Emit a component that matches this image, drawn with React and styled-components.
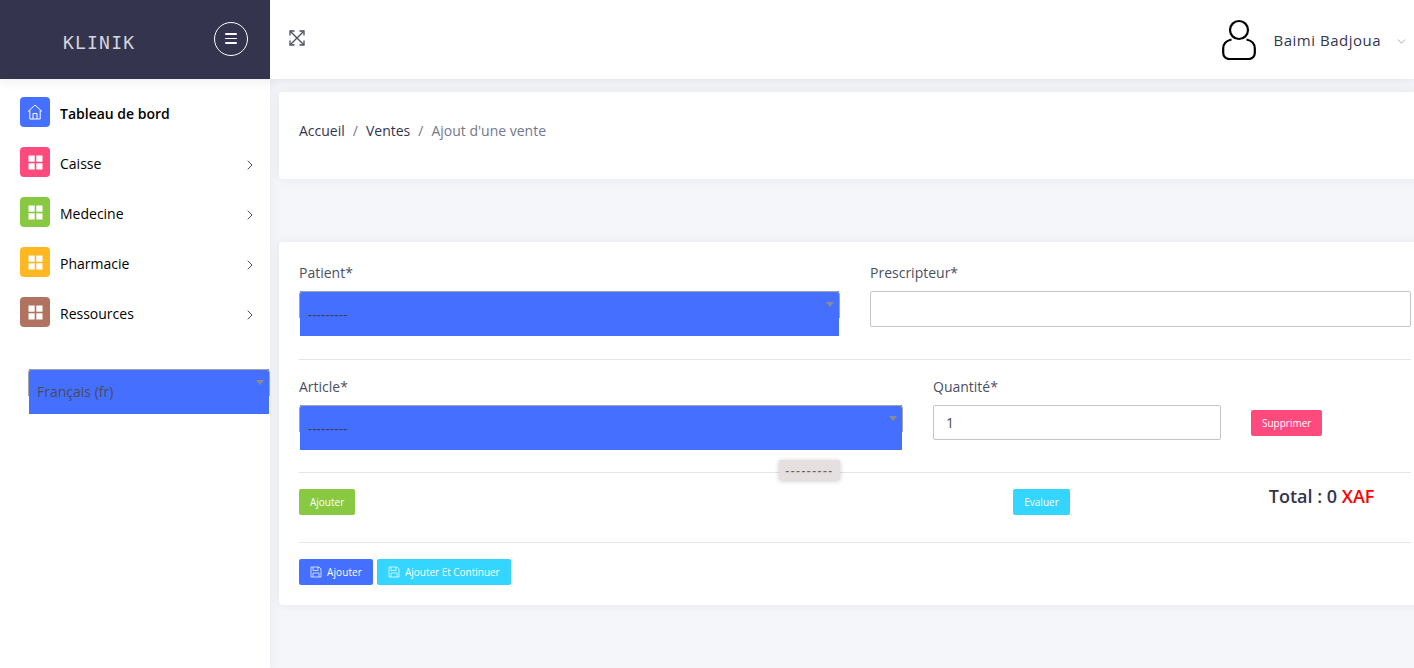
import React from "react";
import styled, { createGlobalStyle } from "styled-components";
import { ChevronRight, ChevronDown } from "lucide-react";

const Global = createGlobalStyle`
  html, body { margin: 0; padding: 0; height: 100%; overflow: hidden; background: #f5f6fa; }
  body { font-family: "Open Sans", "Liberation Sans", sans-serif; font-size: 14px; color: #343a50; }
  * { box-sizing: border-box; }
`;

const Page = styled.div`
  width: 1414px; height: 668px; overflow: hidden;
  display: flex; flex-direction: column;
`;
const Header = styled.header`
  flex: none; height: 79px; display: flex; background: #fff;
  box-shadow: 0 0 12px rgba(50, 50, 80, 0.12); position: relative; z-index: 2;
`;
const Brand = styled.div`
  width: 270px; background: #34344e; display: flex; align-items: center;
  padding: 4px 22px 0 63px; justify-content: space-between;
`;
const Logo = styled.div`
  font-family: "DejaVu Sans Mono", monospace; font-size: 18px; letter-spacing: 1.2px;
  color: #d4d4dc; padding-top: 1px;
`;
const Burger = styled.div`
  width: 34px; height: 34px; border: 1px solid #fff; border-radius: 50%;
  display: flex; flex-direction: column; justify-content: center; align-items: center; gap: 3px;
  margin-top: -6px;
`;
const BurgerLine = styled.span`
  width: 12px; height: 1.5px; background: #fff; border-radius: 1px;
`;
const Topbar = styled.div`
  flex: 1; display: flex; align-items: center; justify-content: space-between;
  padding: 0 6px 0 19px; color: #34344e;
`;
const ExpandIcon = styled.svg`
  margin-top: -4px; display: block;
`;
const User = styled.div`
  display: flex; align-items: center;
`;
const UserName = styled.span`
  font-size: 15px; margin-left: 18px; color: #34344e; letter-spacing: 0.5px;
`;
const Caret = styled.span`
  display: flex; margin-left: 14px; margin-top: 3px; color: #74788d;
`;
const Body = styled.div`
  flex: 1; display: flex; min-height: 0;
`;
const Sidebar = styled.nav`
  flex: none; width: 270px; background: #fff; padding-top: 18px;
  box-shadow: 0 0 10px rgba(50, 50, 80, 0.08); position: relative; z-index: 1;
`;
const MenuRow = styled.div`
  display: flex; align-items: center; height: 30px; margin: 0 0 20px 20px; padding-right: 12px;
`;
const IconBox = styled.span`
  width: 30px; height: 30px; border-radius: 4px; background: ${p => p.$color};
  display: flex; align-items: center; justify-content: center; color: #fff;
`;
const MenuLabel = styled.span`
  flex: 1; margin-left: 10px; font-size: 14px; color: #000; margin-top: 3px;
  font-weight: ${p => (p.$bold ? 600 : 400)};
`;
const MenuChevron = styled.span`
  display: flex; color: #222; margin-top: 5px;
`;
const SideSelect = styled.div`
  margin: 42px 0 0 28px; width: 242px;
`;
const SelectWrap = styled.div`
  position: relative; height: 45px; padding: 0 1px;
`;
const SelectFill = styled.div`
  height: 45px; background: #4570ff; color: ${p => p.$ink};
  padding: ${p => p.$top}px 0 0 ${p => p.$pad}px; font-size: ${p => p.$size}px; line-height: 22px;
  letter-spacing: ${p => p.$track}px; font-weight: ${p => p.$weight};
`;
const SelectFrame = styled.span`
  position: absolute; left: 0; right: 0; top: 0; height: 27px;
  border: 1px solid #a3a3aa; border-bottom: 0; border-radius: 4px 4px 0 0;
  pointer-events: none;
`;
const SelectArrow = styled.span`
  position: absolute; right: 6px; top: 11px; width: 0; height: 0;
  border-left: 4px solid transparent; border-right: 4px solid transparent;
  border-top: 5px solid #8c8c8c;
`;
const Main = styled.main`
  flex: none; width: 1152px; margin-left: 9px; padding-top: 13px;
`;
const Card = styled.section`
  background: #fff; border-radius: 4px;
  box-shadow: 0 0 10px rgba(50, 50, 80, 0.08);
`;
const Crumbs = styled(Card)`
  height: 87px; display: flex; align-items: center; padding: 0 20px 11px; font-size: 14px;
`;
const Crumb = styled.span`
  color: ${p => (p.$muted ? "#74788d" : "#34344e")};
`;
const Sep = styled.span`
  color: #74788d; margin: 0 8px;
`;
const FormCard = styled(Card)`
  margin-top: 63px; height: 363px; padding: 21px 20px 0; position: relative;
`;
const Row = styled.div`
  display: grid; grid-template-columns: ${p => p.$cols}; column-gap: 30px; align-items: start;
`;
const Label = styled.label`
  display: block; font-size: 14px; line-height: 20px; color: #4a4f63; margin-bottom: 8px;
`;
const Input = styled.div`
  height: ${p => p.$h}px; border: 1px solid #c4c4c4; border-radius: 2px; background: #fff;
  padding: 0 12px; display: flex; align-items: center; color: #495057; font-size: 14px;
`;
const Rule = styled.hr`
  border: 0; border-top: 1px solid #e4e5e9; margin: ${p => p.$m};
`;
const Btn = styled.span`
  display: inline-flex; align-items: center; height: 26px; border-radius: 2px;
  background: ${p => p.$color}; color: #fff; font-size: 10px; font-weight: 400;
  padding: 0 11px; white-space: nowrap; letter-spacing: ${p => p.$track || 0}px;
`;
const BtnIcon = styled.svg`
  display: block; margin-right: 5px; flex: none;
`;
const DeleteSlot = styled.div`
  padding-top: 33px;
`;
const ActionRow = styled.div`
  display: flex; align-items: flex-start; height: 53px;
`;
const EvalSlot = styled.div`
  margin-left: 658px;
`;
const Total = styled.div`
  margin-left: 199px; font-size: 18px; font-weight: 600; color: #34344e; line-height: 14px;
`;
const Red = styled.span`
  color: #f00;
`;
const Buttons = styled.div`
  display: flex; gap: 4px;
`;
const Popup = styled.div`
  position: absolute; left: 500px; top: 218px; width: 61px; height: 20px;
  background: #e6dfdf; border-radius: 2px; box-shadow: 0 1px 5px rgba(0,0,0,.22);
  font-size: 12px; font-weight: 600; color: #666; display: flex; align-items: center; justify-content: center;
  letter-spacing: 1.5px;
`;

const Grid = () => (
  <svg width="15" height="15" viewBox="0 0 15 15" fill="#fff">
    <rect x="0.5" y="0.5" width="6.2" height="6.2" />
    <rect x="8.3" y="0.5" width="6.2" height="6.2" />
    <rect x="0.5" y="8.3" width="6.2" height="6.2" />
    <rect x="8.3" y="8.3" width="6.2" height="6.2" />
  </svg>
);

const HouseIcon = () => (
  <svg width="16" height="16" viewBox="0 0 16 16" fill="none" stroke="#fff" strokeWidth="1">
    <path d="M1 7.5 8 1l7 6.500" />
    <path d="M2.800 6.200V15h10.400V6.200" />
    <path d="M6 15V9.500h4V15" />
  </svg>
);

const Arrows = () => (
  <ExpandIcon width="16" height="16" viewBox="0 0 16 16" fill="none" stroke="#4a4a62" strokeWidth="1.300">
    <path d="M1.500 1.500 14.500 14.500M14.500 1.500 1.500 14.500" />
    <path d="M1 5.500V1h4.500M10.500 1H15v4.500M15 10.500V15h-4.500M5.500 15H1v-4.500" />
  </ExpandIcon>
);

const UserIcon = () => (
  <svg width="34" height="41" viewBox="0 0 34 41" fill="none" stroke="#000" strokeWidth="2.200">
    <circle cx="17" cy="11" r="9" />
    <path d="M9.500 20.500C5 21.500 1.200 24.500 1.200 29.500V34a6 6 0 0 0 6 6h19.600a6 6 0 0 0 6-6v-4.500C32.800 24.500 29 21.500 24.500 20.500" />
  </svg>
);

const Floppy = () => (
  <BtnIcon width="12" height="12" viewBox="0 0 12 12" fill="none" stroke="#fff" strokeOpacity=".7" strokeWidth="1">
    <path d="M1 1h8l2 2v8H1z" />
    <path d="M3 1v3.500h5V1M3 11V7h6v4" />
  </BtnIcon>
);

const Select = ({ pad = 8, size = 12, track = 0.55, top = 13, weight = 600, ink = "#3c3c58", children }) => (
  <SelectWrap>
    <SelectFill $pad={pad} $size={size} $track={track} $top={top} $weight={weight} $ink={ink}>{children}</SelectFill>
    <SelectFrame />
    <SelectArrow />
  </SelectWrap>
);

const items = [
  ["Caisse", "#ff4a7d"],
  ["Medecine", "#88c941"],
  ["Pharmacie", "#ffb822"],
  ["Ressources", "#b1735f"],
];

export default function App() {
  return (
    <Page>
      <Global />
      <Header>
        <Brand>
          <Logo>KLINIK</Logo>
          <Burger><BurgerLine /><BurgerLine /><BurgerLine /></Burger>
        </Brand>
        <Topbar>
          <Arrows />
          <User>
            <UserIcon />
            <UserName>Baimi Badjoua</UserName>
            <Caret><ChevronDown size={13} strokeWidth={1.2} /></Caret>
          </User>
        </Topbar>
      </Header>
      <Body>
        <Sidebar>
          <MenuRow>
            <IconBox $color="#4570ff"><HouseIcon /></IconBox>
            <MenuLabel $bold>Tableau de bord</MenuLabel>
          </MenuRow>
          {items.map(([name, color]) => (
            <MenuRow key={name}>
              <IconBox $color={color}><Grid /></IconBox>
              <MenuLabel>{name}</MenuLabel>
              <MenuChevron><ChevronRight size={16} strokeWidth={1.2} /></MenuChevron>
            </MenuRow>
          ))}
          <SideSelect>
            <Select size={14} pad={8} track={0} top={12} weight={400} ink="#4a4a5c">Français (fr)</Select>
          </SideSelect>
        </Sidebar>
        <Main>
          <Crumbs>
            <Crumb>Accueil</Crumb><Sep>/</Sep>
            <Crumb>Ventes</Crumb><Sep>/</Sep>
            <Crumb $muted>Ajout d'une vente</Crumb>
          </Crumbs>
          <FormCard>
            <Row $cols="541px 541px">
              <div>
                <Label>Patient*</Label>
                <Select>---------</Select>
              </div>
              <div>
                <Label>Prescripteur*</Label>
                <Input $h={36} />
              </div>
            </Row>
            <Rule $m="23px 0 17px" />
            <Row $cols="604px 288px 71px">
              <div>
                <Label>Article*</Label>
                <Select>---------</Select>
              </div>
              <div>
                <Label>Quantité*</Label>
                <Input $h={35}>1</Input>
              </div>
              <DeleteSlot><Btn $color="#ff4a7d">Supprimer</Btn></DeleteSlot>
            </Row>
            <Rule $m="22px 0 16px" />
            <ActionRow>
              <Btn $color="#88c941">Ajouter</Btn>
              <EvalSlot><Btn $color="#34d5ff">Evaluer</Btn></EvalSlot>
              <Total>Total : 0 <Red>XAF</Red></Total>
            </ActionRow>
            <Rule $m="0 0 16px" />
            <Buttons>
              <Btn $color="#4570ff" $track={0.1}><Floppy />Ajouter</Btn>
              <Btn $color="#34d5ff" $track={-0.02}><Floppy />Ajouter Et Continuer</Btn>
            </Buttons>
            <Popup>---------</Popup>
          </FormCard>
        </Main>
      </Body>
    </Page>
  );
}
